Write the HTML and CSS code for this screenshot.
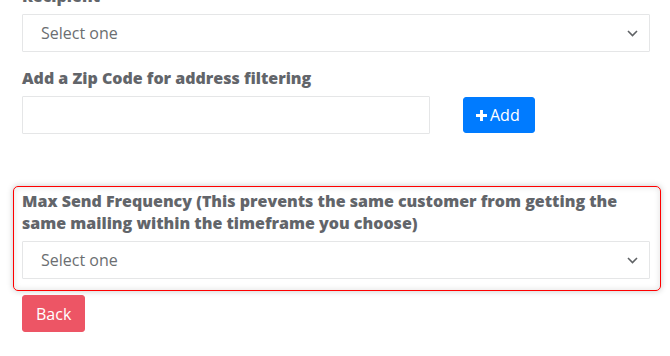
FILE: index.html
```html
<!DOCTYPE html>
<html>
<head>
<meta charset="utf-8">
<link rel="stylesheet" href="styles.css">
</head>
<body>
<div class="page">
  <div class="group">
    <label class="label">Recipient</label>
    <div class="select">
      <span class="select-text">Select one</span>
      <svg class="chev" width="11" height="7" viewBox="0 0 11 7"><path d="M1 1l4.5 4.5L10 1" fill="none" stroke="#5f6265" stroke-width="1.6"/></svg>
    </div>
  </div>
  <div class="group zip">
    <label class="label">Add a Zip Code for address filtering</label>
    <div class="zip-row">
      <div class="input"></div>
      <button class="btn btn-blue"><svg class="plus" width="11" height="11" viewBox="0 0 12 12"><path d="M4.4 0h3.2v4.4H12v3.2H7.6V12H4.4V7.6H0V4.4h4.4z" fill="#fff"/></svg>Add</button>
    </div>
  </div>
  <div class="highlight">
    <label class="label">Max Send Frequency (This prevents the same customer from getting the same mailing within the timeframe you choose)</label>
    <div class="select">
      <span class="select-text">Select one</span>
      <svg class="chev" width="11" height="7" viewBox="0 0 11 7"><path d="M1 1l4.5 4.5L10 1" fill="none" stroke="#5f6265" stroke-width="1.6"/></svg>
    </div>
  </div>
  <button class="btn btn-red">Back</button>
</div>
</body>
</html>
```
FILE: styles.css
```css
html, body { margin: 0; padding: 0; background: #fff; }
body { font-family: "Open Sans", "Liberation Sans", sans-serif; font-size: 16px; line-height: 22px; color: #676a6c; }
.page { padding: 0 20px 0 22px; margin-top: -15px; }
.label { display: block; font-weight: 800; margin-bottom: 7px; color: #62656a; }
.group { margin-bottom: 15px; }
.select { height: 38px; box-sizing: border-box; border: 1px solid #e5e6e7; border-radius: 1px; display: flex; align-items: center; justify-content: space-between; padding: 0 11px 0 18px; background: #fff; }
.select-text { color: #6b6e71; }
.chev { display: block; margin-top: 1px; }
.zip { margin-bottom: 52px; }
.zip-row { display: flex; align-items: flex-start; gap: 33px; }
.input { width: 408px; height: 38px; box-sizing: border-box; border: 1px solid #e5e6e7; border-radius: 1px; }
.btn { font-family: inherit; font-size: 16px; line-height: 22px; border: 1px solid transparent; border-radius: 3px; color: #fff; padding: 0 13px; display: inline-flex; align-items: center; cursor: pointer; }
.btn-blue { background: #007bff; border-color: #007bff; height: 36px; margin-top: 1px; padding: 0 14px 0 12px; }
.plus { margin-right: 3px; }
.highlight { margin: 0 -11px 4px -9px; padding: 3px 10px 11px 8px; border: 1px solid #f00; border-radius: 5px; box-shadow: 0 0 6px rgba(0,0,0,0.22), inset 0 0 6px rgba(0,0,0,0.12); }
.btn-red { background: #ed5565; border-color: #ed5565; height: 37px; }
```
